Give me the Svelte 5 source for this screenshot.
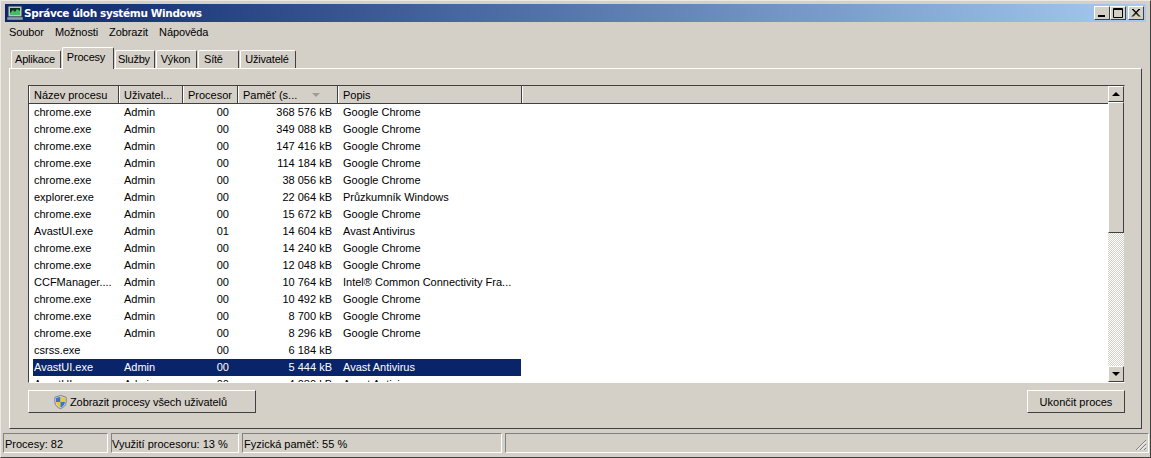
<script lang="ts">
    const menus = ["Soubor", "Možnosti", "Zobrazit", "Nápověda"];
    const tabs = [
        { name: "Aplikace", width: 50, left: false },
        { name: "Procesy", width: 52, left: false },
        { name: "Služby", width: 40, left: false },
        { name: "Výkon", width: 41, left: false },
        { name: "Sítě", width: 41, left: true },
        { name: "Uživatelé", width: 56, left: false }
    ];
    const chrome = "Google Chrome";
    const avast = "Avast Antivirus";
    const rows = [
        ["chrome.exe", "Admin", "00", "368 576 kB", chrome],
        ["chrome.exe", "Admin", "00", "349 088 kB", chrome],
        ["chrome.exe", "Admin", "00", "147 416 kB", chrome],
        ["chrome.exe", "Admin", "00", "114 184 kB", chrome],
        ["chrome.exe", "Admin", "00", "38 056 kB", chrome],
        ["explorer.exe", "Admin", "00", "22 064 kB", "Průzkumník Windows"],
        ["chrome.exe", "Admin", "00", "15 672 kB", chrome],
        ["AvastUI.exe", "Admin", "01", "14 604 kB", avast],
        ["chrome.exe", "Admin", "00", "14 240 kB", chrome],
        ["chrome.exe", "Admin", "00", "12 048 kB", chrome],
        ["CCFManager....", "Admin", "00", "10 764 kB", "Intel® Common Connectivity Fra..."],
        ["chrome.exe", "Admin", "00", "10 492 kB", chrome],
        ["chrome.exe", "Admin", "00", "8 700 kB", chrome],
        ["chrome.exe", "Admin", "00", "8 296 kB", chrome],
        ["csrss.exe", "", "00", "6 184 kB", ""],
        ["AvastUI.exe", "Admin", "00", "5 444 kB", avast],
        ["AvastUI.exe", "Admin", "00", "4 080 kB", avast]
    ];
    const selected = 15;
</script>

<div class="window">
    <div class="titlebar">
        <svg class="appicon" viewBox="0 0 16 16" width="16" height="16">
            <rect x="1" y="1" width="14" height="11" fill="#b8c4d0" stroke="#203040"/>
            <rect x="3" y="3" width="10" height="7" fill="#103020"/>
            <path d="M3 8 L6 5 L8 7 L10 4 L13 6 V10 H3 Z" fill="#40c060"/>
            <rect x="0" y="12" width="16" height="3" fill="#90a0b0" stroke="#203040" stroke-width="0.5"/>
        </svg>
        <span class="title">Správce úloh systému Windows</span>
        <div class="caption">
            <button class="capbtn" aria-label="min"><svg viewBox="0 0 14 12" width="14" height="12"><rect x="3" y="8" width="7" height="2" fill="#000"/></svg></button>
            <button class="capbtn" aria-label="max"><svg viewBox="0 0 14 12" width="14" height="12"><path d="M2.5 1.5h9v9h-9z M2 2.5h10" fill="none" stroke="#000"/></svg></button>
            <button class="capbtn close" aria-label="close"><svg viewBox="0 0 14 12" width="14" height="12"><path d="M3 2l7 7.5M4 2l7 7.5M10 2l-7 7.5M11 2l-7 7.5" stroke="#000" fill="none"/></svg></button>
        </div>
    </div>

    <div class="menu">
        {#each menus as m}
            <span>{m}</span>
        {/each}
    </div>

    <div class="tabs">
        {#each tabs as t, i}
            <div class="tab" class:active={i == 1} class:left={t.left} style="width: {t.width}px">{t.name}</div>
        {/each}
    </div>

    <div class="panel">
        <div class="list">
            <div class="content">
                <div class="head">
                    <div class="hcell c1">Název procesu</div>
                    <div class="hcell c2">Uživatel...</div>
                    <div class="hcell c3">Procesor</div>
                    <div class="hcell c4">Paměť (s...<i class="sort"></i></div>
                    <div class="hcell c5">Popis</div>
                    <div class="hcell filler"></div>
                </div>
                <div class="rows">
                    {#each rows as r, i}
                        <div class="row" class:sel={i == selected}>
                            <div class="c1 cell">{r[0]}</div>
                            <div class="c2 cell">{r[1]}</div>
                            <div class="c3 cell right">{r[2]}</div>
                            <div class="c4 cell right">{r[3]}</div>
                            <div class="c5 cell">{r[4]}</div>
                        </div>
                    {/each}
                </div>
            </div>
            <div class="scrollbar">
                <div class="arrow"><i class="up"></i></div>
                <div class="thumb"></div>
                <div class="track"></div>
                <div class="arrow"><i class="down"></i></div>
            </div>
        </div>
        <div class="actions">
            <button class="btn users">
                <svg viewBox="0 0 16 16" width="15" height="16">
                    <path d="M8 1 L14 3 V8 C14 12 11 14 8 15 C5 14 2 12 2 8 V3 Z" fill="#d8dce4" stroke="#6a7a90"/>
                    <path d="M8 2.5 V8 H3.2 V3.8 Z" fill="#3c74c8"/>
                    <path d="M8 2.5 L12.8 3.8 V8 H8 Z" fill="#f0c830"/>
                    <path d="M3.2 8 H8 V13.8 C5.5 13 3.5 11 3.2 8 Z" fill="#f0c830"/>
                    <path d="M8 8 H12.8 C12.5 11 10.5 13 8 13.8 Z" fill="#3c74c8"/>
                </svg>
                Zobrazit procesy všech uživatelů
            </button>
            <button class="btn end">Ukončit proces</button>
        </div>
    </div>

    <div class="status">
        <div class="sp s1">Procesy: 82</div>
        <div class="sp s2">Využití procesoru: 13 %</div>
        <div class="sp s3">Fyzická paměť: 55 %</div>
        <div class="sp s4">
            <svg class="grip" viewBox="0 0 12 12" width="12" height="12">
                <path d="M11 1L1 11M11 5L5 11M11 9L9 11" stroke="#808080" fill="none"/>
                <path d="M11 2.5L2.5 11M11 6.5L6.5 11M11 10.5L10.5 11" stroke="#fff" fill="none"/>
            </svg>
        </div>
    </div>
</div>

<style>
    :global(body)
    {
        margin: 0;
        background: #d4d0c8;
    }

    .window
    {
        width: 1151px;
        height: 458px;
        box-sizing: border-box;
        padding: 4px 4px 0 4px;
        background: #d4d0c8;
        font-family: "Liberation Sans", Arial, sans-serif;
        font-size: 11px;
        color: #000;
        overflow: hidden;
        border-top: 1px solid #ece9e2;
        border-left: 1px solid #ece9e2;
        border-right: 1px solid #404040;
        border-bottom: 1px solid #404040;
    }

    .titlebar
    {
        height: 18px;
        display: flex;
        align-items: center;
        background: linear-gradient(to right, #0a246a, #a6caf0);
        padding-left: 2px;
        margin-top: -1px;
    }

    .appicon
    {
        margin-right: 1px;
    }

    .title
    {
        color: #fff;
        font-weight: bold;
        font-family: "DejaVu Sans", sans-serif;
        font-size: 10.5px;
        letter-spacing: -0.35px;
    }

    .caption
    {
        margin-left: auto;
        display: flex;
        margin-right: 2px;
    }

    .capbtn
    {
        width: 16px;
        height: 14px;
        padding: 0;
        display: flex;
        align-items: center;
        justify-content: center;
        background: #d4d0c8;
        border: 1px solid;
        border-color: #fff #404040 #404040 #fff;
    }

    .close
    {
        margin-left: 2px;
    }

    .menu
    {
        height: 20px;
        display: flex;
        align-items: center;
        gap: 11px;
        padding-left: 4px;
        letter-spacing: -0.1px;
    }

    .tabs
    {
        height: 20px;
        margin-top: 6px;
        display: flex;
        align-items: flex-end;
        padding-left: 6px;
        gap: 1px;
        position: relative;
        z-index: 1;
        letter-spacing: -0.2px;
    }

    .tab
    {
        height: 18px;
        line-height: 17px;
        box-sizing: border-box;
        text-align: center;
        border: 1px solid;
        border-color: #fff #404040 transparent #fff;
        border-bottom: none;
        border-radius: 2px 2px 0 0;
        background: #d4d0c8;
        padding-right: 2px;
    }

    .tab.left
    {
        text-align: left;
        padding-left: 5px;
    }

    .tab.active
    {
        height: 22px;
        line-height: 18px;
        margin-bottom: -1px;
        padding-bottom: 3px;
        padding-right: 4px;
    }

    .panel
    {
        margin-left: 4px;
        margin-right: 4px;
        height: 361px;
        box-sizing: border-box;
        border: 1px solid;
        border-color: #fff #404040 #404040 #fff;
        padding: 16px 16px 0 18px;
    }

    .list
    {
        height: 298px;
        box-sizing: border-box;
        display: flex;
        background: #fff;
        border: 1px solid;
        border-color: #404040 #d4d0c8 #fff #404040;
        overflow: hidden;
    }

    .content
    {
        flex: 1;
        min-width: 0;
        overflow: hidden;
    }

    .head
    {
        display: flex;
        height: 18px;
        border-bottom: 1px solid #404040;
        background: #d4d0c8;
        box-sizing: border-box;
    }

    .hcell
    {
        box-sizing: border-box;
        line-height: 18px;
        padding-left: 4px;
        border-right: 1px solid #404040;
        border-left: 1px solid #fff;
        position: relative;
        white-space: nowrap;
    }

    .filler
    {
        flex: 1;
        border-right: none;
    }

    .sort
    {
        position: absolute;
        left: 73px;
        top: 7px;
        border-left: 4px solid transparent;
        border-right: 4px solid transparent;
        border-top: 4px solid #a09c94;
    }

    .c1 { width: 90px; }
    .c2 { width: 64px; }
    .c3 { width: 55px; }
    .c4 { width: 100px; }
    .c5 { width: 184px; }

    .rows
    {
        padding-left: 3px;
    }

    .row
    {
        display: flex;
        height: 17px;
        line-height: 17px;
        width: 488px;
        margin-left: 1px;
    }

    .row .c1 { width: 89px; padding-left: 1px; }
    .row .c2 { width: 62px; }
    .row .c3 { width: 45px; }
    .row .c4 { width: 103px; }
    .row .c5 { width: 189px; }

    .cell
    {
        box-sizing: border-box;
        white-space: nowrap;
        overflow: hidden;
        padding-left: 2px;
    }

    .row .c5
    {
        padding-left: 11px;
    }

    .right
    {
        text-align: right;
    }

    .sel
    {
        background: #0a246a;
        color: #fff;
    }

    .scrollbar
    {
        width: 16px;
        display: flex;
        flex-direction: column;
        flex: none;
    }

    .arrow
    {
        height: 16px;
        flex: none;
        box-sizing: border-box;
        background: #d4d0c8;
        border: 1px solid;
        border-color: #fff #404040 #404040 #fff;
        display: flex;
        align-items: center;
        justify-content: center;
    }

    .up
    {
        border-left: 4px solid transparent;
        border-right: 4px solid transparent;
        border-bottom: 4px solid #000;
    }

    .down
    {
        border-left: 4px solid transparent;
        border-right: 4px solid transparent;
        border-top: 4px solid #000;
    }

    .thumb
    {
        height: 131px;
        flex: none;
        box-sizing: border-box;
        background: #d4d0c8;
        border: 1px solid;
        border-color: #fff #404040 #404040 #fff;
    }

    .track
    {
        flex: 1;
        background: repeating-conic-gradient(#fff 0 25%, #d4d0c8 0 50%) 0 0 / 2px 2px;
    }

    .actions
    {
        display: flex;
        justify-content: space-between;
        margin-top: 7px;
    }

    .btn
    {
        height: 23px;
        box-sizing: border-box;
        font: inherit;
        color: #000;
        background: #d4d0c8;
        border: 1px solid;
        border-color: #fff #404040 #404040 #fff;
        display: flex;
        align-items: center;
        justify-content: center;
        gap: 2px;
        padding: 0;
    }

    .users
    {
        width: 228px;
        letter-spacing: -0.08px;
        padding-right: 4px;
    }

    .end
    {
        width: 98px;
    }

    .status
    {
        display: flex;
        height: 20px;
        margin-top: 4px;
        margin-left: -2px;
        margin-right: -3px;
        gap: 3px;
    }

    .sp
    {
        box-sizing: border-box;
        height: 20px;
        line-height: 20px;
        padding-left: 1px;
        border: 1px solid;
        border-color: #808080 #fff #fff #808080;
        position: relative;
    }

    .s1 { width: 105px; }
    .s2 { width: 128px; padding-left: 0; }
    .s3 { width: 260px; }
    .s4 { flex: 1; }

    .grip
    {
        position: absolute;
        right: 1px;
        bottom: 1px;
    }
</style>
